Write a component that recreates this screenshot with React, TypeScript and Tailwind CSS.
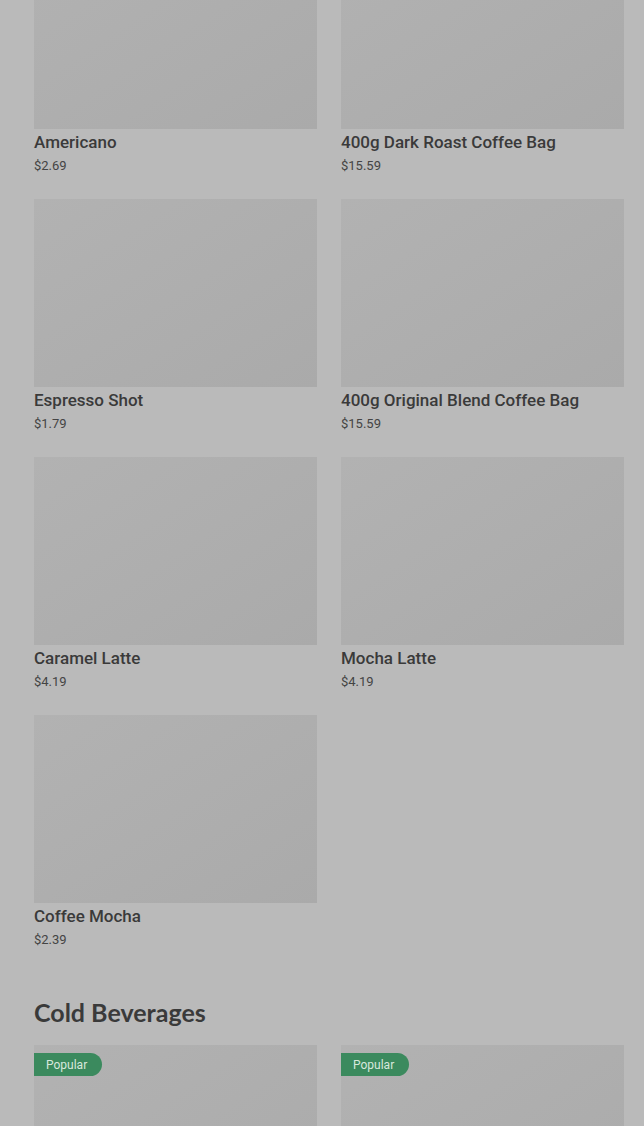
import React from 'react';

type Product = { name: string; price: string; popular?: boolean };

const HOT: Product[] = [
  { name: 'Americano', price: '$2.69' },
  { name: '400g Dark Roast Coffee Bag', price: '$15.59' },
  { name: 'Espresso Shot', price: '$1.79' },
  { name: '400g Original Blend Coffee Bag', price: '$15.59' },
  { name: 'Caramel Latte', price: '$4.19' },
  { name: 'Mocha Latte', price: '$4.19' },
  { name: 'Coffee Mocha', price: '$2.39' },
];

const COLD: Product[] = [
  { name: 'Iced Latte', price: '$3.99', popular: true },
  { name: 'Cold Brew', price: '$3.49', popular: true },
];

function ProductCard({ item }: { item: Product }) {
  return (
    <div className="flex flex-col">
      <div className="relative h-[188px] bg-gradient-to-br from-[#b2b2b2] to-[#aaaaaa]">
        {item.popular && (
          <span className="absolute left-0 top-2 h-[23px] w-[68px] flex items-center pl-3 rounded-r-full bg-[#3b8a5e] text-[12px] text-[#d8e8dd] font-['Roboto',sans-serif]">
            Popular
          </span>
        )}
      </div>
      <p className="text-[17px] leading-[27px] font-medium text-[#3a3a3a] font-['Roboto',sans-serif]">{item.name}</p>
      <p className="text-[13px] leading-5 text-[#444444] font-['Roboto',sans-serif]">{item.price}</p>
    </div>
  );
}

export default function App() {
  return (
    <div className="h-screen bg-[#bababa] overflow-hidden">
      <div className="pl-[34px] pr-[20px] -mt-[59px]">
        <div className="grid grid-cols-2 gap-x-6 gap-y-[23px]">
          {HOT.map(p => (
            <ProductCard key={p.name} item={p} />
          ))}
        </div>

        <h2 className="mt-[46px] text-[25px] leading-8 font-bold text-[#3a3a3a] font-['Lato',sans-serif]">
          Cold Beverages
        </h2>
        <div className="mt-[17px] grid grid-cols-2 gap-x-6 gap-y-[23px]">
          {COLD.map(p => (
            <ProductCard key={p.name} item={p} />
          ))}
        </div>
      </div>
    </div>
  );
}
